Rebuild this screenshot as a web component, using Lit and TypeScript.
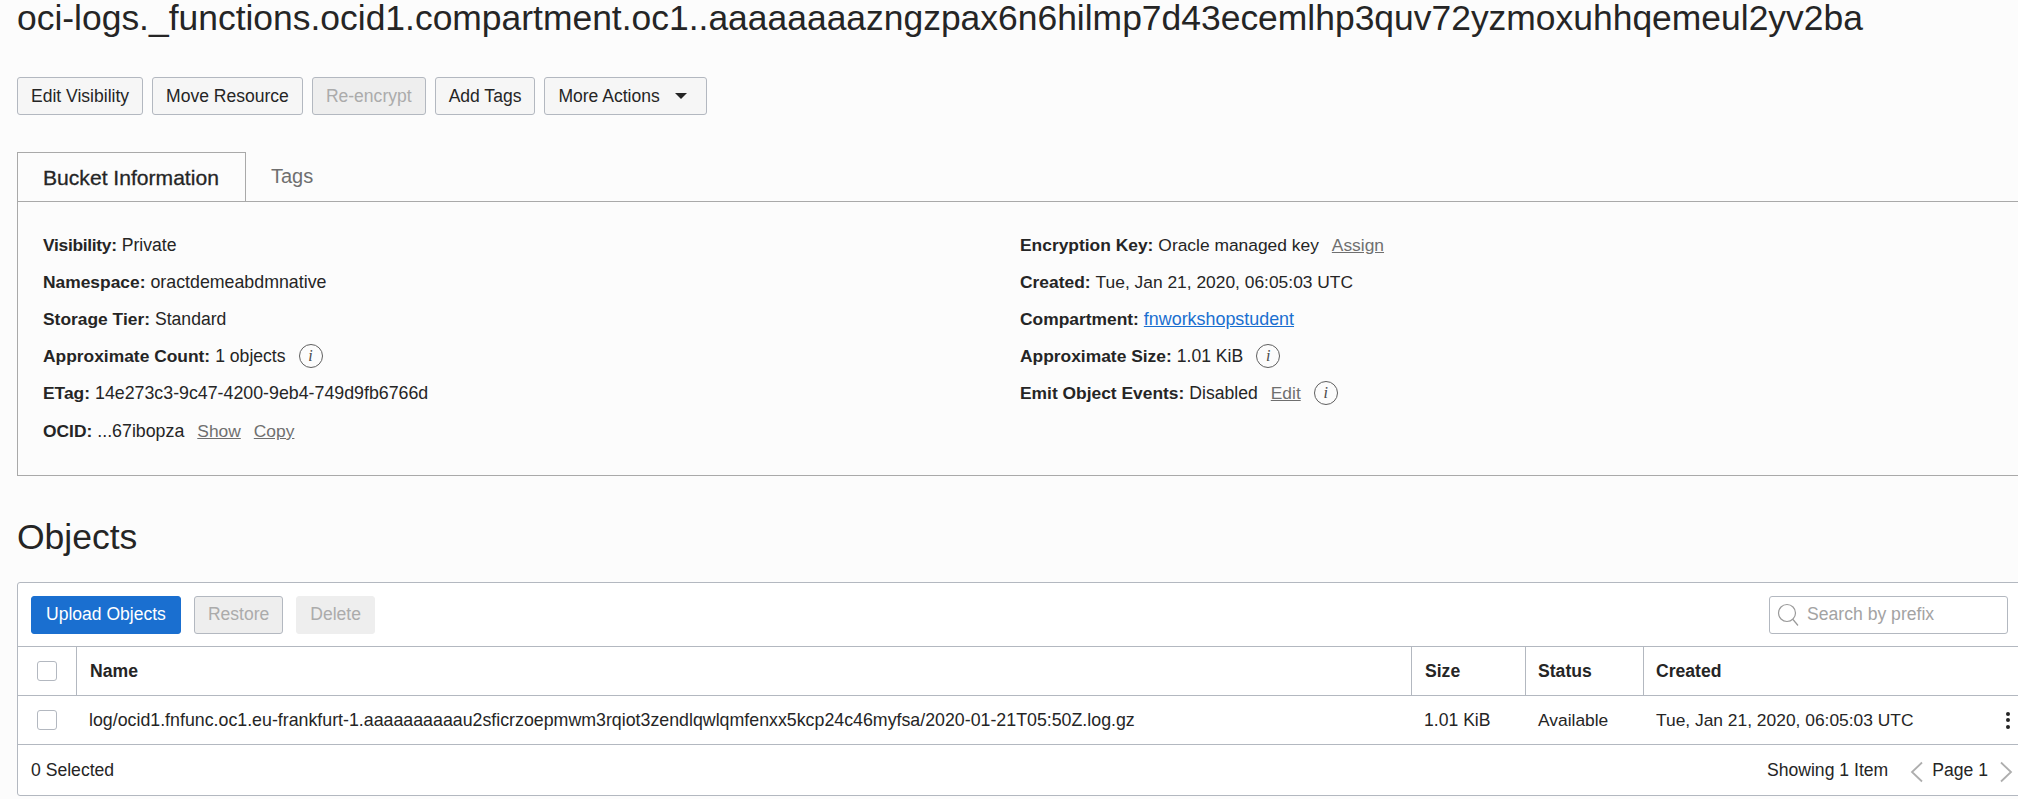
import {LitElement, html, css} from 'lit';
import {customElement} from 'lit/decorators.js';

@customElement('app-root')
export class AppRoot extends LitElement {
  static styles = css`
    :host {
      display: block;
      width: 2018px;
      height: 799px;
      overflow: hidden;
      background: #fcfcfc;
      color: #252525;
      font-family: "Liberation Sans", Arial, sans-serif;
      font-size: 17.6px;
    }
    .page {
      box-sizing: border-box;
      width: 2040px;
      padding-left: 17px;
    }
    h1 {
      margin: 0;
      height: 77px;
      font-size: 35.45px;
      font-weight: 400;
      line-height: 37px;
      white-space: nowrap;
    }
    .actions {
      display: flex;
      gap: 9px;
      height: 38px;
    }
    .btn {
      display: flex;
      align-items: center;
      box-sizing: border-box;
      height: 38px;
      padding: 0 13px;
      border: 1px solid #b3b8c0;
      border-radius: 3px;
      background: #f6f6f6;
      font-size: 17.55px;
      white-space: nowrap;
    }
    .btn.off {
      background: #eeeeee;
      color: #ababab;
    }
    .btn.plain-off {
      background: #eeeeee;
      color: #ababab;
      border-color: #eeeeee;
    }
    .btn.primary {
      padding: 0 14px;
      background: #1a6fd0;
      border-color: #1a6fd0;
      color: #fff;
    }
    .caret {
      width: 0;
      height: 0;
      margin-left: 15px;
      margin-right: 6px;
      border-left: 6px solid transparent;
      border-right: 6px solid transparent;
      border-top: 6px solid #252525;
    }
    .tabs {
      display: flex;
      height: 49px;
      margin-top: 37px;
      border-bottom: 1px solid #a9a9a9;
    }
    .tab {
      box-sizing: border-box;
      height: 49px;
      padding: 0 25px;
      font-size: 20px;
      line-height: 50px;
    }
    .tab.active {
      width: 229px;
      border: 1px solid #a9a9a9;
      border-bottom: none;
      background: #fcfcfc;
      font-size: 21.1px;
      -webkit-text-stroke: 0.3px #252525;
      white-space: nowrap;
    }
    .tab.idle {
      color: #6f6f6f;
      line-height: 49px;
    }
    .info {
      display: grid;
      grid-template-columns: 977px 1fr;
      box-sizing: border-box;
      height: 274px;
      padding: 24.6px 25px 0;
      border: 1px solid #a9a9a9;
      border-top: none;
    }
    .col {
      display: flex;
      flex-direction: column;
    }
    .row {
      display: flex;
      align-items: center;
      height: 37px;
      white-space: pre;
    }
    .row.last {
      margin-top: 1.4px;
    }
    b {
      font-size: 17.4px;
      font-weight: 700;
      margin-right: 5px;
    }
    b.tight {
      letter-spacing: -0.3px;
    }
    .wide {
      font-size: 17.8px;
    }
    .narrow {
      font-size: 17.4px;
    }
    .link {
      color: #6f6f6f;
      font-size: 17.4px;
      text-decoration: underline;
      margin-left: 13px;
    }
    .blue {
      color: #1a6fd0;
      font-size: 17.9px;
      text-decoration: underline;
    }
    .i {
      display: inline-flex;
      align-items: center;
      justify-content: center;
      box-sizing: border-box;
      width: 24px;
      height: 24px;
      margin-left: 13px;
      border: 1px solid #5f5f5f;
      border-radius: 50%;
      color: #4a4a4a;
      font-family: "Liberation Serif", serif;
      font-style: italic;
      font-size: 16px;
    }
    h2 {
      margin: 0;
      height: 106px;
      box-sizing: border-box;
      padding-top: 41px;
      font-size: 35.5px;
      font-weight: 400;
      line-height: 40px;
    }
    .card {
      box-sizing: border-box;
      height: 214px;
      background: #fff;
      border: 1px solid #b3b8c0;
      border-radius: 3px;
    }
    .toolbar {
      display: flex;
      align-items: center;
      gap: 13px;
      box-sizing: border-box;
      height: 64px;
      padding: 0 31px 0 13px;
      border-bottom: 1px solid #b3b8c0;
    }
    .search {
      display: flex;
      align-items: center;
      box-sizing: border-box;
      width: 239px;
      height: 38px;
      margin-left: auto;
      padding-left: 7px;
      border: 1px solid #b3b8c0;
      border-radius: 3px;
      color: #a3a3a3;
    }
    .search svg {
      margin-right: 8px;
    }
    .grid {
      display: grid;
      grid-template-columns: 59px 1335px 114px 118px 1fr;
      height: 49px;
      box-sizing: border-box;
      border-bottom: 1px solid #b3b8c0;
    }
    .cell {
      display: flex;
      align-items: center;
      box-sizing: border-box;
      padding-left: 12px;
      white-space: nowrap;
    }
    .head .cell {
      font-weight: 700;
      border-right: 1px solid #b3b8c0;
    }
    .head .cell.pad {
      padding-left: 13px;
    }
    .head .cell:last-child {
      border-right: none;
    }
    .cell.check,
    .head .cell.check {
      padding-left: 19px;
    }
    .cell.actions-cell {
      padding-right: 29px;
    }
    .box {
      box-sizing: border-box;
      width: 20px;
      height: 20px;
      border: 1px solid #b3b8c0;
      border-radius: 3px;
      background: #fff;
    }
    .dots {
      display: flex;
      flex-direction: column;
      gap: 2.5px;
      margin-left: auto;
    }
    .dots span {
      width: 4px;
      height: 4px;
      border-radius: 50%;
      background: #252525;
    }
    .footer {
      display: flex;
      align-items: center;
      box-sizing: border-box;
      height: 50px;
      padding: 0 26px 0 13px;
    }
    .pager {
      display: flex;
      align-items: center;
      margin-left: auto;
      white-space: nowrap;
    }
    .pager svg {
      display: block;
      margin-top: 4px;
    }
    .pager .text {
      margin: 1px 11px 0 8px;
    }
    .pager .first {
      margin-right: 22px;
    }
  `;

  render() {
    return html`
      <div class="page">
        <h1>oci-logs._functions.ocid1.compartment.oc1..aaaaaaaazngzpax6n6hilmp7d43ecemlhp3quv72yzmoxuhhqemeul2yv2ba</h1>
        <div class="actions">
          <div class="btn">Edit Visibility</div>
          <div class="btn">Move Resource</div>
          <div class="btn off">Re-encrypt</div>
          <div class="btn">Add Tags</div>
          <div class="btn">More Actions<span class="caret"></span></div>
        </div>
        <div class="tabs">
          <div class="tab active">Bucket Information</div>
          <div class="tab idle">Tags</div>
        </div>
        <div class="info">
          <div class="col">
            <div class="row"><b class="tight">Visibility:</b>Private</div>
            <div class="row"><b>Namespace:</b><span class="wide">oractdemeabdmnative</span></div>
            <div class="row"><b>Storage Tier:</b>Standard</div>
            <div class="row"><b>Approximate Count:</b>1 objects<span class="i">i</span></div>
            <div class="row"><b>ETag:</b><span class="wide">14e273c3-9c47-4200-9eb4-749d9fb6766d</span></div>
            <div class="row last"><b>OCID:</b><span class="wide">...67ibopza</span><span class="link">Show</span><span class="link">Copy</span></div>
          </div>
          <div class="col">
            <div class="row"><b>Encryption Key:</b><span class="narrow">Oracle managed key</span><span class="link">Assign</span></div>
            <div class="row"><b>Created:</b><span class="narrow">Tue, Jan 21, 2020, 06:05:03 UTC</span></div>
            <div class="row"><b>Compartment:</b><span class="blue">fnworkshopstudent</span></div>
            <div class="row"><b>Approximate Size:</b>1.01 KiB<span class="i">i</span></div>
            <div class="row"><b>Emit Object Events:</b>Disabled<span class="link">Edit</span><span class="i">i</span></div>
          </div>
        </div>
        <h2>Objects</h2>
        <div class="card">
          <div class="toolbar">
            <div class="btn primary">Upload Objects</div>
            <div class="btn off">Restore</div>
            <div class="btn plain-off">Delete</div>
            <div class="search">
              <svg width="22" height="24" viewBox="0 0 22 24" fill="none" stroke="#9a9a9a" stroke-width="1.2">
                <circle cx="10" cy="10" r="8.5"></circle>
                <path d="M16 16.5l5 6"></path>
              </svg>
              Search by prefix
            </div>
          </div>
          <div class="grid head">
            <div class="cell check"><span class="box"></span></div>
            <div class="cell pad">Name</div>
            <div class="cell pad">Size</div>
            <div class="cell">Status</div>
            <div class="cell">Created</div>
          </div>
          <div class="grid">
            <div class="cell check"><span class="box"></span></div>
            <div class="cell wide">log/ocid1.fnfunc.oc1.eu-frankfurt-1.aaaaaaaaaau2sficrzoepmwm3rqiot3zendlqwlqmfenxx5kcp24c46myfsa/2020-01-21T05:50Z.log.gz</div>
            <div class="cell">1.01 KiB</div>
            <div class="cell narrow">Available</div>
            <div class="cell narrow actions-cell">Tue, Jan 21, 2020, 06:05:03 UTC<span class="dots"><span></span><span></span><span></span></span></div>
          </div>
          <div class="footer">
            0 Selected
            <div class="pager">
              <span class="first">Showing 1 Item</span>
              <svg width="14" height="22" viewBox="0 0 14 22" fill="none" stroke="#aeaeae" stroke-width="1.8"><path d="M12 1.5L2 11l10 9.5"></path></svg>
              <span class="text">Page 1</span>
              <svg width="14" height="22" viewBox="0 0 14 22" fill="none" stroke="#aeaeae" stroke-width="1.8"><path d="M2 1.5L12 11 2 20.5"></path></svg>
            </div>
          </div>
        </div>
      </div>
    `;
  }
}
